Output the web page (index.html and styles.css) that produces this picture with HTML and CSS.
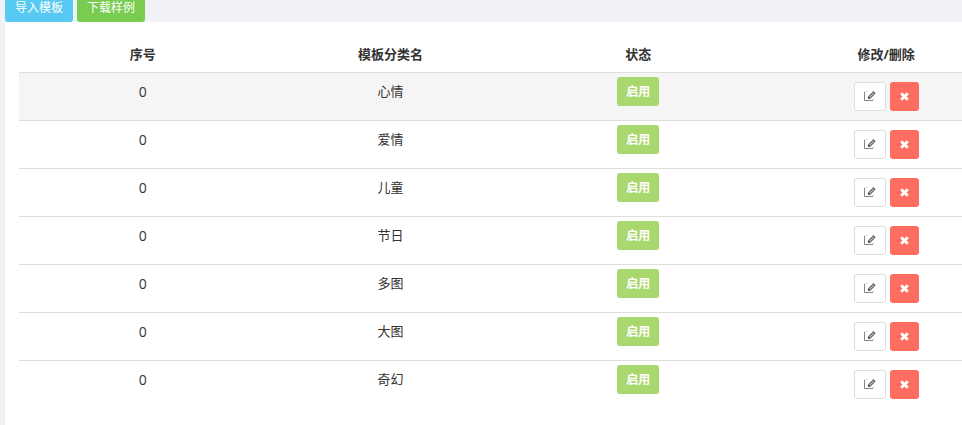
FILE: index.html
```html
<!DOCTYPE html>
<html lang="zh-CN">
<head>
<meta charset="utf-8">
<title>模板分类</title>
<link rel="stylesheet" href="styles.css">
</head>
<body>
<svg class="sprite" aria-hidden="true">
  <symbol id="edit" viewBox="0 0 12 11">
    <path d="M4 .5H.5V9.5H9.5V7" fill="none" stroke="currentColor" stroke-opacity=".2"/>
    <path d="M.5 1V9.5H9" fill="none" stroke="currentColor" stroke-opacity=".75"/>
    <path d="M3.8 8V5.7L9.5 0l2.3 2.3L6.1 8z" fill="currentColor"/>
    <path d="M5.8 6L10 1.8" stroke="#fff" stroke-width=".8"/>
  </symbol>
  <symbol id="times" viewBox="0 0 9 9">
    <path d="M2.2 2.2L6.8 6.8M6.8 2.2L2.2 6.8" fill="none" stroke="currentColor" stroke-width="2.8" stroke-linecap="square"/>
  </symbol>
</svg>
<main class="page">
  <div class="toolbar">
    <button class="btn btn-info" type="button">导入模板</button>
    <button class="btn btn-success" type="button">下载样例</button>
  </div>
  <section class="panel">
    <table class="table">
      <thead>
        <tr><th scope="col">序号</th><th scope="col">模板分类名</th><th scope="col">状态</th><th scope="col">修改/删除</th></tr>
      </thead>
      <tbody id="rows"></tbody>
    </table>
  </section>
</main>
<script src="script.js"></script>
</body>
</html>
```
FILE: styles.css
```css
* { box-sizing: border-box; }

body {
  margin: 0;
  min-height: 100vh;
  background: #f1f2f7;
  color: #333;
  font: 13px/20px "Open Sans", "Noto Sans CJK SC", sans-serif;
  overflow: hidden;
}

.sprite { position: absolute; width: 0; height: 0; }

.page {
  display: flex;
  flex-direction: column;
  min-height: 100vh;
  padding-left: 5px;
}

.toolbar { display: flex; gap: 4px; margin-top: -7px; }

.btn {
  display: inline-flex;
  align-items: center;
  justify-content: center;
  height: 29px;
  padding: 0 10px;
  border: 0;
  border-radius: 3px;
  color: #fff;
  font: inherit;
  font-size: 12px;
}

.btn-info { background: #58c9f3; }
.btn-success { background: #78cd51; }

.panel {
  flex: 1;
  padding: 14px 0 14px 14px;
  background: #fff;
  overflow: hidden;
}

/* The table runs past the right edge of the panel, which clips it. */
.table {
  width: calc(100% + 48px);
  table-layout: fixed;
  border-collapse: collapse;
  text-align: center;
}

.table th { padding: 8px; font-weight: 700; }
.table td {
  padding: 4px 8px;
  border-top: 1px solid #ddd;
  line-height: 29px;
  vertical-align: top;
}
.table tbody tr:first-child { background: #f5f5f5; }

.table td:first-child { font-size: 14px; }

.status {
  padding: 0 9px;
  background: #a9d86e;
  font-weight: 700;
  vertical-align: top;
}

.actions { display: flex; justify-content: center; gap: 4px; padding: 5px 0; }

.btn-edit {
  width: 32px;
  padding: 0;
  border: 1px solid #ddd;
  background: #fff;
  color: #666;
}
.btn-delete { width: 29px; padding: 0; background: #ff6c60; }

.icon-edit { width: 12px; height: 11px; }
.icon-times { width: 9px; height: 9px; }
```
FILE: script.js
```js
const names = ["心情", "爱情", "儿童", "节日", "多图", "大图", "奇幻"];

document.getElementById("rows").innerHTML = names.map((name) => `
  <tr>
    <td>0</td>
    <td>${name}</td>
    <td><button class="btn status" type="button">启用</button></td>
    <td>
      <div class="actions">
        <button class="btn btn-edit" type="button" aria-label="修改"><svg class="icon-edit"><use href="#edit"/></svg></button>
        <button class="btn btn-delete" type="button" aria-label="删除"><svg class="icon-times"><use href="#times"/></svg></button>
      </div>
    </td>
  </tr>`).join("");
```
